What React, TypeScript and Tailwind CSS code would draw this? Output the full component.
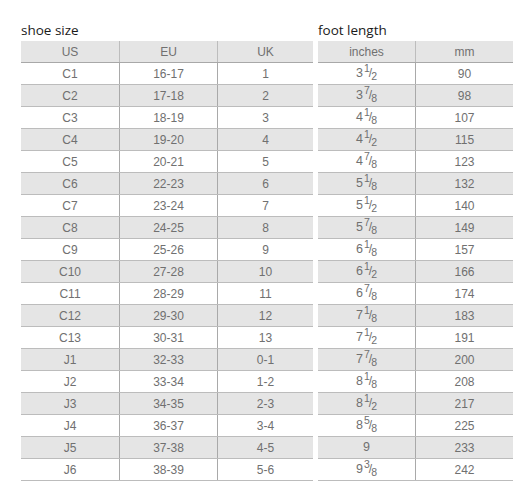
import React from "react";

type Row = { us: string; eu: string; uk: string; inch: [string, string?, string?]; mm: string };

const rows: Row[] = [
    { us: "C1", eu: "16-17", uk: "1", inch: ["3", "1", "2"], mm: "90" },
    { us: "C2", eu: "17-18", uk: "2", inch: ["3", "7", "8"], mm: "98" },
    { us: "C3", eu: "18-19", uk: "3", inch: ["4", "1", "8"], mm: "107" },
    { us: "C4", eu: "19-20", uk: "4", inch: ["4", "1", "2"], mm: "115" },
    { us: "C5", eu: "20-21", uk: "5", inch: ["4", "7", "8"], mm: "123" },
    { us: "C6", eu: "22-23", uk: "6", inch: ["5", "1", "8"], mm: "132" },
    { us: "C7", eu: "23-24", uk: "7", inch: ["5", "1", "2"], mm: "140" },
    { us: "C8", eu: "24-25", uk: "8", inch: ["5", "7", "8"], mm: "149" },
    { us: "C9", eu: "25-26", uk: "9", inch: ["6", "1", "8"], mm: "157" },
    { us: "C10", eu: "27-28", uk: "10", inch: ["6", "1", "2"], mm: "166" },
    { us: "C11", eu: "28-29", uk: "11", inch: ["6", "7", "8"], mm: "174" },
    { us: "C12", eu: "29-30", uk: "12", inch: ["7", "1", "8"], mm: "183" },
    { us: "C13", eu: "30-31", uk: "13", inch: ["7", "1", "2"], mm: "191" },
    { us: "J1", eu: "32-33", uk: "0-1", inch: ["7", "7", "8"], mm: "200" },
    { us: "J2", eu: "33-34", uk: "1-2", inch: ["8", "1", "8"], mm: "208" },
    { us: "J3", eu: "34-35", uk: "2-3", inch: ["8", "1", "2"], mm: "217" },
    { us: "J4", eu: "36-37", uk: "3-4", inch: ["8", "5", "8"], mm: "225" },
    { us: "J5", eu: "37-38", uk: "4-5", inch: ["9"], mm: "233" },
    { us: "J6", eu: "38-39", uk: "5-6", inch: ["9", "3", "8"], mm: "242" },
];

// whole number with a small stacked-looking fraction (sup / sub)
const Fraction = ({ v }: { v: [string, string?, string?] }) => (
    <span className="inline-flex items-baseline">
        <span className="text-[12.5px]">{v[0]}</span>
        {v[1] && (
            <>
                <span className="text-[10.5px] relative -top-[5px] ml-[1px]">{v[1]}</span>
                <span className="text-[12px] -mx-[1px]">/</span>
                <span className="text-[10.5px] relative top-[3px]">{v[2]}</span>
            </>
        )}
    </span>
);

const cell = "flex items-center justify-center h-[21px]";

export default function App() {
    return (
        <div className="w-[525px] h-[487px] bg-white pl-[21px] pt-[20px] flex gap-[5px] text-[#707070] text-[12px] font-['Liberation_Sans',Arial,sans-serif]">
            {/* shoe size */}
            <div className="w-[292px] flex flex-col">
                <div className="h-[21px] text-[13.5px] text-[#1a1a1a] font-['Open_Sans',sans-serif] leading-[21px]">shoe size</div>
                <div className="grid grid-cols-[98px_98px_96px] bg-[#e5e5e5] border-b border-[#a8a8a8]">
                    <div className={cell}>US</div>
                    <div className={`${cell} border-l border-[#bdbdbd]`}>EU</div>
                    <div className={`${cell} border-l border-[#bdbdbd]`}>UK</div>
                </div>
                {rows.map((r, i) => (
                    <div key={r.us} className={`grid grid-cols-[98px_98px_96px] border-b border-[#bcbcbc] ${i % 2 ? "bg-[#e5e5e5]" : "bg-white"}`}>
                        <div className={cell}>{r.us}</div>
                        <div className={`${cell} border-l border-[#a9a9a9]`}>{r.eu}</div>
                        <div className={`${cell} border-l border-[#a9a9a9]`}>{r.uk}</div>
                    </div>
                ))}
            </div>

            {/* foot length */}
            <div className="w-[195px] flex flex-col">
                <div className="h-[21px] text-[13.5px] text-[#1a1a1a] font-['Open_Sans',sans-serif] leading-[21px]">foot length</div>
                <div className="grid grid-cols-[97px_98px] bg-[#e5e5e5] border-b border-[#a8a8a8]">
                    <div className={cell}>inches</div>
                    <div className={`${cell} border-l border-[#bdbdbd]`}>mm</div>
                </div>
                {rows.map((r, i) => (
                    <div key={r.mm} className={`grid grid-cols-[97px_98px] border-b border-[#bcbcbc] ${i % 2 ? "bg-[#e5e5e5]" : "bg-white"}`}>
                        <div className={cell}>
                            <Fraction v={r.inch} />
                        </div>
                        <div className={`${cell} border-l border-[#a9a9a9]`}>{r.mm}</div>
                    </div>
                ))}
            </div>
        </div>
    );
}
